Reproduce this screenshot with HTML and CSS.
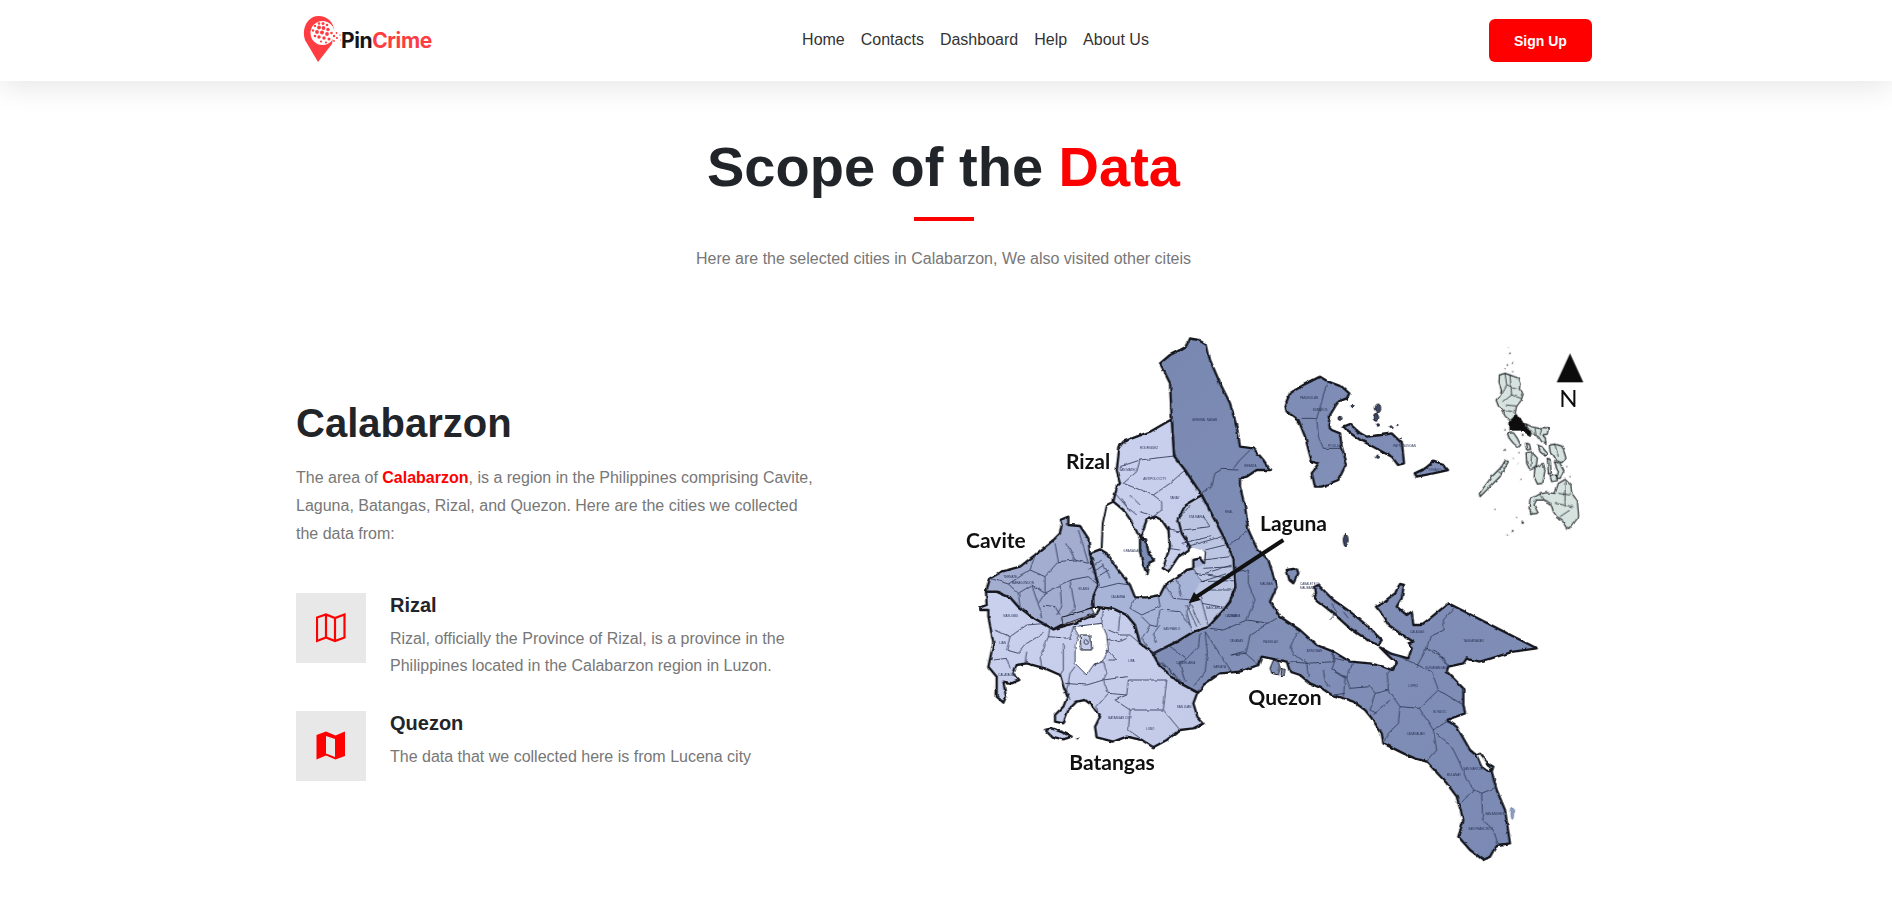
FILE: index.html
```html
<!DOCTYPE html>
<html lang="en">
<head>
<meta charset="utf-8">
<title>PinCrime</title>
<link rel="stylesheet" href="styles.css">
</head>
<body>
<header class="topbar">
  <a class="brand" href="#">
    <svg class="brand-pin" viewBox="0 0 40 50" aria-hidden="true">
      <path class="pin-body" d="M15 48 L2 26 C-2 14 5 2 15.500 2 C25 2 31 9 31 17 L29 30 Z"/>
      <circle class="pin-hole" cx="19.500" cy="19" r="12"/>
      <g class="pin-dots">
        <circle cx="16" cy="9.500" r="1.300"/><circle cx="20" cy="9.500" r="1.500"/><circle cx="24" cy="11" r="1.300"/>
        <circle cx="12" cy="12" r="1.200"/><circle cx="16" cy="13.500" r="1.900"/><circle cx="20.500" cy="14" r="1.900"/><circle cx="25" cy="15.500" r="1.700"/>
        <circle cx="10" cy="16.500" r="1.200"/><circle cx="14" cy="18" r="1.900"/><circle cx="19" cy="18.500" r="2"/><circle cx="24" cy="20" r="1.900"/><circle cx="28.500" cy="19" r="1.300"/>
        <circle cx="12" cy="22" r="1.300"/><circle cx="16" cy="23" r="1.700"/><circle cx="21" cy="24" r="1.700"/><circle cx="26" cy="25" r="1.500"/>
        <circle cx="18" cy="27.500" r="1.100"/><circle cx="23" cy="28.500" r="1.100"/>
        <circle cx="31" cy="22" r="1.200"/><circle cx="33.500" cy="19" r=".9"/><circle cx="34" cy="24" r="1.100"/><circle cx="31" cy="27" r=".9"/><circle cx="37" cy="21" r=".7"/><circle cx="37.500" cy="26" r=".6"/>
      </g>
    </svg>
    <span class="brand-name">Pin<span class="brand-accent">Crime</span></span>
  </a>
  <nav class="nav">
    <a href="#">Home</a>
    <a href="#">Contacts</a>
    <a href="#">Dashboard</a>
    <a href="#">Help</a>
    <a href="#">About Us</a>
  </nav>
  <a class="signup" href="#">Sign Up</a>
</header>

<main>
  <section class="intro">
    <h1>Scope of the <span class="red">Data</span></h1>
    <div class="rule"></div>
    <p>Here are the selected cities in Calabarzon, We also visited other citeis</p>
  </section>

  <section class="scope">
    <div class="copy">
      <h2>Calabarzon</h2>
      <p class="lead">The area of <strong class="red">Calabarzon</strong>, is a region in the Philippines comprising Cavite, Laguna, Batangas, Rizal, and Quezon. Here are the cities we collected the data from:</p>
      <div class="items">
        <div class="item">
          <div class="item-icon">
            <svg viewBox="0 0 30 30" aria-hidden="true"><path class="map-line" d="M1 28 V4.500 L10 1.500 L19 5 L28.500 1.500 V24.500 L19 28 L10 24.500 Z M10 1.500 V24.500 M19 5 V28"/></svg>
          </div>
          <div class="item-text">
            <h3>Rizal</h3>
            <p>Rizal, officially the Province of Rizal, is a province in the Philippines located in the Calabarzon region in Luzon.</p>
          </div>
        </div>
        <div class="item">
          <div class="item-icon">
            <svg viewBox="0 0 30 30" aria-hidden="true"><path class="map-solid" fill-rule="evenodd" d="M0.500 28.500 V4 L10 0.500 L19.500 4.500 L29 0.500 V25 L19.500 28.500 L10 24.500 Z M10 5 V22.500 L19 26 V8 Z"/></svg>
          </div>
          <div class="item-text">
            <h3>Quezon</h3>
            <p>The data that we collected here is from Lucena city</p>
          </div>
        </div>
      </div>
    </div>

    <svg class="region-map" viewBox="0 -540 1893 1650" role="img" aria-label="Map of Calabarzon">
      <defs>
        <linearGradient id="deep" gradientUnits="userSpaceOnUse" x1="600" y1="-500" x2="1700" y2="1000">
          <stop offset="0" stop-color="#7888b1"/><stop offset=".5" stop-color="#8290b8"/><stop offset="1" stop-color="#7a8ab4"/>
        </linearGradient>
        <linearGradient id="pale" gradientUnits="userSpaceOnUse" x1="80" y1="200" x2="700" y2="700">
          <stop offset="0" stop-color="#c9d1ee"/><stop offset="1" stop-color="#c3cbe9"/>
        </linearGradient>
        <filter id="rough" filterUnits="userSpaceOnUse" x="0" y="-540" width="1893" height="1650">
          <feTurbulence type="fractalNoise" baseFrequency=".045" numOctaves="2" seed="4" result="noise"/>
          <feDisplacementMap in="SourceGraphic" in2="noise" scale="9" xChannelSelector="R" yChannelSelector="G"/>
        </filter>
      </defs>

      <g class="rough">
      <path class="land deep" d="M690,-515 L715,-510 L740,-495 L750,-450 L780,-380 L810,-320 L830,-250 L840,-190 L880,-185 L910,-150 L930,-120 L890,-120 L860,-100 L840,-95 L840,-70 L855,-10 L865,60 L890,115 L925,150 L950,230 L930,275 L960,320 L1020,360 L1070,405 L1120,425 L1170,455 L1230,460 L1270,470 L1295,480 L1310,460 L1290,442 L1260,412 L1290,430 L1345,445 L1355,415 L1345,400 L1360,395 L1320,370 L1285,345 L1260,305 L1248,290 L1265,280 L1305,250 L1315,230 L1320,222 L1332,225 L1325,265 L1310,290 L1340,315 L1355,305 L1360,345 L1385,345 L1465,280 L1730,415 L1660,425 L1560,455 L1525,448 L1520,445 L1510,460 L1465,470 L1460,485 L1510,535 L1510,585 L1515,610 L1460,630 L1490,650 L1530,720 L1565,750 L1600,770 L1595,785 L1610,840 L1635,900 L1650,1000 L1610,1005 L1590,1040 L1570,1050 L1530,1020 L1495,980 L1510,930 L1490,860 L1460,820 L1400,755 L1365,745 L1330,730 L1270,700 L1265,670 L1235,625 L1215,600 L1180,575 L1150,565 L1115,555 L1085,535 L1050,520 L1020,495 L990,485 L980,455 L905,440 L895,465 L840,485 L780,490 L730,525 L715,548 L660,520 L600,470 L578,428 L650,395 L700,365 L745,350 L790,300 L810,275 L825,230 L820,150 L790,80 L725,-45 L642,-162 L635,-272 L630,-380 L600,-440 L630,-465 L680,-490 Z"/>
      <path class="land pale" d="M78,245 L110,245 L150,262 L175,290 L215,320 L270,350 L280,358 L340,340 L410,312 L420,292 L460,296 L500,315 L525,345 L540,400 L575,425 L600,470 L660,520 L712,548 L700,580 L712,620 L730,640 L700,655 L660,660 L620,690 L580,712 L545,690 L500,680 L460,695 L410,682 L405,650 L420,620 L395,585 L375,570 L350,575 L325,600 L310,640 L285,635 L285,615 L310,590 L322,560 L310,530 L300,495 L255,475 L200,460 L170,465 L160,490 L178,510 L155,520 L130,515 L138,560 L130,578 L110,560 L110,500 L85,470 L100,400 L85,320 L85,300 L60,300 L60,292 L80,285 Z"/>
      <path class="land mid" d="M90,205 L125,185 L180,170 L225,135 L280,90 L300,70 L305,45 L300,30 L325,20 L325,45 L360,48 L385,85 L390,130 L415,225 L400,260 L400,290 L360,315 L280,358 L215,320 L175,290 L150,262 L110,245 L78,245 Z"/>
      <path class="land mid-soft" d="M390,130 L420,118 L440,130 L475,180 L510,225 L525,262 L560,262 L600,255 L615,225 L650,205 L680,180 L700,175 L700,150 L720,145 L735,165 L738,125 L715,105 L690,110 L665,70 L655,30 L675,-15 L725,-45 L790,80 L820,150 L825,230 L810,275 L790,300 L745,350 L700,365 L650,395 L580,430 L540,400 L525,345 L500,315 L460,296 L420,292 L400,290 L400,260 L415,225 Z"/>
      <path class="mid-lake" d="M715,-45 L790,80 L820,150 L825,230 L790,300 L745,350 L700,365 L680,300 L720,215 L700,175 L735,165 L738,125 L690,110 L665,70 L655,30 L675,-15 Z"/>
      <path class="laguna-edge" d="M725,-45 L790,80 L820,150 L825,230 L810,275 L790,300 L745,350 L700,365"/>
      <path class="land pale" d="M635,-272 L570,-235 L490,-205 L478,-190 L475,-162 L470,-120 L480,-80 L470,-70 L460,-25 L490,0 L515,35 L540,85 L560,30 L585,20 L605,30 L625,60 L630,110 L608,175 L625,185 L655,140 L685,120 L690,110 L665,70 L655,30 L675,-15 L725,-45 L675,-120 L642,-162 Z"/>
      <path class="land deep" d="M540,85 L558,88 L565,130 L585,150 L568,158 L562,195 L548,160 L540,125 Z"/>
      <path class="shore" d="M460,-25 L440,-15 L428,40 L425,115"/>

      <path class="lake" d="M340,350 L425,340 L440,375 L445,420 L430,450 L400,465 L380,495 L345,460 L345,410 L355,375 Z"/>
      <path class="land pale thin" d="M360,375 L392,375 L395,420 L362,420 Z"/>
      <circle class="thin-ring" cx="379" cy="396" r="7"/>

      <path class="land mid thin" d="M305,322 L395,295 L402,310 L308,345 Z"/>

      <path class="land deep" d="M600,190 L640,165 L690,140 L715,155 L755,170 L778,190 L770,205 L745,215 L735,230 L720,255 L715,290 L725,300 L750,310 L755,350 L770,400 L745,450 L695,470 L675,470 L665,430 L685,400 L665,395 L645,320 L625,270 L590,245 L585,225 Z" transform="translate(390,-540)"/>
      <path class="land deep" d="M1151,-250 L1170,-258 L1201,-230 L1220,-220 L1264,-225 L1295,-230 L1326,-200 L1332,-140 L1314,-135 L1295,-160 L1257,-180 L1220,-200 L1201,-210 L1164,-235 Z"/>
      <path class="land deep" d="M1364,-110 L1395,-125 L1420,-145 L1451,-135 L1464,-120 L1420,-110 L1370,-100 Z"/>
      <path class="land deep" d="M1065,230 L1075,225 L1120,270 L1170,305 L1225,350 L1265,390 L1255,405 L1230,395 L1170,355 L1120,310 L1075,275 L1060,260 L1068,250 Z"/>
      <path class="land deep" d="M980,180 L1010,175 L1015,190 L1000,220 L988,210 Z"/>
      <path class="land deep thin" d="M940,450 L955,455 L960,475 L955,495 L935,490 L930,475 Z"/>
      <path class="land deep thin" d="M965,475 L975,478 L972,498 L962,500 Z"/>
      <path class="land pale" d="M255,660 L275,655 L315,670 L335,680 L310,688 L275,680 Z"/>
      <ellipse class="dot" cx="1157" cy="90" rx="7" ry="20"/>
      <ellipse class="dot" cx="1254" cy="-305" rx="8" ry="13"/>
      <ellipse class="dot" cx="1248" cy="-278" rx="8" ry="12"/>
      <circle class="dot" cx="1254" cy="-255" r="4"/>
      <circle class="dot" cx="1251" cy="-160" r="5"/>
      <circle class="dot" cx="1177" cy="-312" r="5"/>
      <circle class="dot" cx="1140" cy="-275" r="6"/>
      <circle class="dot" cx="1293" cy="-250" r="3"/>
      <circle class="dot" cx="1312" cy="-255" r="2"/>
      <circle class="dot" cx="1322" cy="-215" r="2"/>
      <circle class="dot" cx="352" cy="685" r="2.500"/>
      <ellipse class="islet" cx="1657" cy="910" rx="4" ry="18"/>

      <g class="borders">
        <path d="M90,205 L145,222 L210,180 L225,135 M210,180 L255,200 L295,155 L285,100 M295,155 L345,150 L320,100 M345,150 L385,160 L355,60 M255,200 L255,250 L235,280 M145,222 L175,250 L215,225 L255,250 M175,250 L180,290 M215,225 L240,300 L245,325 M255,250 L300,225 L330,210 L385,200 L415,225 M300,225 L305,290 L290,315 M330,210 L345,295 L320,320 M250,285 L285,290 L300,315 M385,180 L425,150 M395,190 L430,165 M405,205 L445,180 M430,160 L450,205 M415,235 L475,220 L510,225"/>
        <path d="M525,262 L510,295 L545,315 L600,290 L595,258 M545,320 L570,345 L590,350 L600,300 L660,305 L690,345 L700,365 M570,345 L545,385 L560,410 M600,345 L580,370 L590,400 M615,225 L640,265 L695,270 L730,250 M650,205 L665,260 M695,270 L680,305 L690,345 M680,285 L710,350 M690,280 L720,345 M720,255 L745,350 M725,280 L780,290 M745,240 L815,240 M735,190 L815,165 M700,175 L725,215 L818,185 M720,215 L822,212"/>
        <path d="M105,360 L150,380 L200,345 L260,340 M150,380 L140,420 L175,430 L200,400 L250,370 M100,450 L140,445 L150,475 M270,350 L265,380 L240,440 L245,470 M200,425 L195,460 M265,380 L330,385 L340,350 M310,400 L310,480 L300,495 M345,470 L330,490 L320,540 L330,570 M315,520 L380,525 L430,510 L445,550 L500,555 L505,510 L620,510 M400,465 L430,455 L440,490 L430,510 L500,500 M445,550 L410,590 L415,620 M500,555 L465,570 L510,600 L505,660 L580,712 M620,510 L610,600 L660,660 M510,600 L610,600 M445,360 L480,375 L510,375 L540,400 M430,300 L425,340 M480,310 L475,365 M440,385 L480,395 L500,385 M440,420 L470,450 L445,450 M605,455 L640,490 L665,520"/>
        <g transform="translate(390,-540)">
          <path d="M90,410 L150,390 L140,425 L100,460 M150,390 L252,378 M100,460 L190,495 L240,460 L285,420 M190,495 L215,515 L215,540 L190,560 L150,545 M75,490 L110,530 L140,555 M95,505 L120,545 M120,495 L150,525 M265,570 L300,525 M235,600 L270,605 M235,655 L270,660 M280,600 L360,590 L340,560 M275,640 L360,620 M290,650 L395,620 M345,660 L405,645 M340,690 L420,680 M340,715 L425,710 M315,730 L420,745 M480,360 L450,390 L430,415 M335,490 L365,470 L375,430 L395,418 L445,420 M418,645 L470,605"/>
          <path d="M710,160 L695,215 L680,265 L685,320 L700,355 L755,355 M635,265 L680,265"/>
        </g>
        <g transform="translate(510,90)">
          <path d="M310,95 L355,90 L355,130 L375,180 L350,240 M240,265 L280,270 L350,240 L385,245 L415,250 L440,235 M415,250 L360,285 L348,340 L300,345 M225,275 L305,395 M225,275 L232,340 L225,395 L190,440 M210,280 L205,320 L170,355 L150,375 L165,425 M65,340 L120,320 L170,355 M300,345 L340,335 L375,365 L385,380 M505,275 L480,320 L490,340 L530,370 L480,365 M605,340 L612,365 L530,370 M530,370 L535,410 M580,390 L585,420 L600,440 M80,360 L120,390 L155,425"/>
          <path d="M605,190 L620,215 L600,240 M640,215 L655,235"/>
        </g>
        <g transform="translate(1020,180)">
          <path d="M95,245 L105,270 L95,300 L135,325 L130,380 M105,265 L158,278 L140,325 L150,355 L210,350 L225,370 M262,312 L265,360 L225,370 L210,420 L230,430 M290,275 L262,312 M265,360 L300,410 L358,415 L415,360 L395,305 L262,243 M300,410 L295,460 L265,490 L255,515 M358,415 L400,480 L410,540 L380,575 M415,360 L490,405 M400,480 L440,455 L470,470 M410,490 L455,530 L475,570 L500,630 L525,660 M525,660 L545,670 L590,650 M525,660 L475,705 M545,670 L548,750 L580,780 L595,825 M220,435 L240,415 L270,390 M465,110 L430,150 L432,180 L390,200 L380,235 L350,290 M380,235 L400,240 L410,245 L445,290 M380,235 L430,265 L445,285 M140,325 L100,300 M135,370 L100,375"/>
        </g>
      </g>

      <path class="tarn" d="M1550,735 L1560,730 L1580,755 L1595,785 L1585,785 L1565,770 Z"/>

      <g class="inset" transform="translate(1500,-540)">
        <path d="M118,135 L135,130 L150,135 L172,143 L180,160 L178,178 L190,190 L183,212 L170,228 L165,250 L172,258 L150,272 L135,258 L125,240 L115,228 L108,210 L122,195 L124,180 L117,160 Z"/>
        <path class="inset-line" d="M135,130 L140,165 L125,190 M140,165 L172,175 M150,135 L155,195 L130,215 M155,195 L183,205 M138,225 L168,228 M128,240 L160,245"/>
        <path d="M195,280 L215,290 L235,295 L250,292 L265,295 L262,312 L245,315 L255,322 L258,340 L245,335 L235,320 L215,310 L205,298 Z"/>
        <path class="inset-line" d="M225,295 L228,315 M245,295 L240,312"/>
        <path d="M142,310 L160,308 L172,325 L182,345 L175,352 L160,340 L148,325 Z"/>
        <path d="M196,340 L208,342 L212,358 L200,360 Z"/>
        <path d="M232,345 L245,350 L262,370 L255,378 L240,365 Z"/>
        <path d="M268,345 L285,342 L305,348 L312,365 L318,385 L305,398 L290,392 L280,375 L270,365 Z"/>
        <path class="inset-line" d="M285,345 L295,380"/>
        <path d="M283,395 L300,400 L312,425 L300,445 L290,445 L295,425 Z"/>
        <path d="M198,368 L215,365 L232,385 L228,412 L210,420 L200,400 Z"/>
        <path class="inset-line" d="M215,370 L212,410"/>
        <path d="M225,412 L250,400 L255,420 L248,460 L232,462 L222,440 Z"/>
        <path d="M262,385 L270,388 L274,430 L265,432 Z"/>
        <path d="M270,438 L288,435 L292,452 L275,455 Z"/>
        <path d="M135,390 L145,395 L120,440 L85,475 L60,500 L58,490 L95,440 L125,410 Z"/>
        <path class="inset-line" d="M128,395 L138,400 M120,410 L132,415 M115,425 L125,430"/>
        <path d="M258,488 L285,490 L295,460 L315,448 L332,465 L335,490 L352,512 L356,560 L345,575 L330,595 L318,592 L305,568 L290,560 L280,545 L272,520 L250,510 L230,510 L222,525 L235,550 L220,552 L207,535 L210,508 L240,492 Z"/>
        <path class="inset-line" d="M295,490 L330,495 M285,520 L340,530 M300,560 L330,540 M315,455 L315,530 M240,495 L250,510"/>
        <path class="inset-black" d="M150,275 L165,258 L180,265 L195,290 L215,305 L210,320 L195,300 L170,300 L150,300 Z"/>
        <g class="inset-dots">
          <circle cx="145" cy="55" r="2"/><circle cx="150" cy="70" r="2.500"/><circle cx="142" cy="105" r="2.500"/><circle cx="157" cy="100" r="2"/><circle cx="158" cy="122" r="2"/><circle cx="135" cy="118" r="2"/>
          <circle cx="135" cy="300" r="2.500"/><circle cx="188" cy="315" r="3"/><circle cx="135" cy="360" r="3"/><circle cx="180" cy="368" r="2"/><circle cx="160" cy="385" r="1.500"/><circle cx="172" cy="400" r="1.500"/><circle cx="183" cy="448" r="2"/>
          <circle cx="105" cy="538" r="2"/><circle cx="170" cy="562" r="2"/><circle cx="188" cy="578" r="4"/><circle cx="215" cy="552" r="4"/><circle cx="155" cy="603" r="3"/><circle cx="142" cy="615" r="2"/><circle cx="322" cy="598" r="2"/><circle cx="320" cy="410" r="2"/><circle cx="330" cy="440" r="2"/>
        </g>
      </g>
      </g>

      <path class="north-mark" d="M1790,-383 L1870,-383 L1830,-470 Z"/>

      <g transform="translate(390,-540)">
        <path class="arrow-shaft" d="M580,630 L320,800"/>
        <path class="arrow-head" d="M296,820 L312,786 L332,810 Z"/>
      </g>

      <text class="label" x="18" y="114">Cavite</text>
      <text class="label" x="328" y="779">Batangas</text>
      <text class="label" x="318" y="-124">Rizal</text>
      <text class="label" x="900" y="62">Laguna</text>
      <text class="label" x="865" y="584">Quezon</text>
      <text class="north" x="1825" y="-308" text-anchor="middle">N</text>

      <g class="tiny">
        <text x="695" y="-268">GENERAL NAKAR</text>
        <text x="852" y="-130">INFANTA</text>
        <text x="795" y="10">REAL</text>
        <text x="540" y="-182">RODRIGUEZ</text>
        <text x="478" y="-118">SAN MATEO</text>
        <text x="550" y="-90">ANTIPOLO CITY</text>
        <text x="630" y="-32">TANAY</text>
        <text x="686" y="25">STA MARIA</text>
        <text x="490" y="125">GRANADAGA</text>
        <text x="1020" y="-332">PANUKULAN</text>
        <text x="1058" y="-298">BURDEOS</text>
        <text x="1105" y="-190">POLILLO</text>
        <text x="1300" y="-190">PATNANUNGAN</text>
        <text x="1405" y="-118">JOMALIG</text>
        <text x="1020" y="225">CABALETE IS</text>
        <text x="1020" y="237">MAUBAN QC</text>
        <text x="900" y="225">MAUBAN</text>
        <text x="800" y="320">LUISIANA</text>
        <text x="810" y="395">TAYABAS</text>
        <text x="910" y="400">PAGBILAO</text>
        <text x="1040" y="425">ATIMONAN</text>
        <text x="1350" y="370">CALAUAG</text>
        <text x="1510" y="395">TAGKAWAYAN</text>
        <text x="1395" y="477">GUINAYANGAN</text>
        <text x="1345" y="530">LOPEZ</text>
        <text x="1420" y="608">BONDOC</text>
        <text x="1340" y="675">CATANAUAN</text>
        <text x="1510" y="780">SAN NARCISO</text>
        <text x="1460" y="798">MULANAY</text>
        <text x="1525" y="960">SAN FRANCISCO</text>
        <text x="1575" y="915">SAN ANDRES</text>
        <text x="130" y="322">NASUGBU</text>
        <text x="118" y="403">LIAN</text>
        <text x="115" y="497">CALATAGAN</text>
        <text x="445" y="627">BATANGAS CITY</text>
        <text x="558" y="660">LOBO</text>
        <text x="650" y="595">SAN JUAN</text>
        <text x="505" y="455">LIPA</text>
        <text x="355" y="240">SILANG</text>
        <text x="130" y="205">TERNATE</text>
        <text x="155" y="222">MARAGONDON</text>
        <text x="452" y="265">CALAMBA</text>
        <text x="610" y="360">SAN PABLO</text>
        <text x="738" y="298">NAGCARLAN</text>
        <text x="795" y="322">LUCBAN</text>
        <text x="760" y="475">SARIAYA</text>
        <text x="648" y="462">CANDELARIA</text>
      </g>
    </svg>
  </section>
</main>
</body>
</html>
```
FILE: styles.css
```css
* {
  box-sizing: border-box;
}

html,
body {
  margin: 0;
  padding: 0;
  background: #fff;
  overflow-x: hidden;
}

body {
  font-family: "Liberation Sans", Arial, sans-serif;
  color: #777;
  font-size: 16px;
}

a {
  text-decoration: none;
  color: inherit;
}

.red {
  color: #ff0000;
}

/* header */
.topbar {
  height: 81px;
  padding: 0 300px 0 303px;
  display: flex;
  align-items: center;
  justify-content: space-between;
  background: #fff;
  box-shadow: 0 6px 30px rgba(0, 0, 0, 0.1);
  position: relative;
}

.brand {
  display: flex;
  align-items: center;
  width: 130px;
}

.brand-pin {
  width: 40px;
  height: 50px;
  flex: none;
  margin-top: -3px;
}

.pin-body {
  fill: #ff3c41;
}

.pin-hole {
  fill: #fff;
}

.pin-dots circle {
  fill: #ff3c41;
}

.brand-name {
  font-family: Inter, "Liberation Sans", sans-serif;
  font-weight: 700;
  font-size: 21px;
  letter-spacing: -0.4px;
  color: #151515;
  margin-left: -2px;
}

.brand-accent {
  color: #ff3c41;
}

.nav {
  display: flex;
  gap: 16px;
  color: #333;
  margin-left: 29px;
  margin-top: -2px;
}

.signup {
  width: 103px;
  height: 43px;
  border-radius: 6px;
  background: #ff0000;
  color: #fff;
  font-weight: 700;
  font-size: 14px;
  display: flex;
  align-items: center;
  justify-content: center;
}

/* intro */
.intro {
  padding: 51px 301px 0 296px;
  text-align: center;
}

.intro h1 {
  margin: 0;
  font-size: 56px;
  line-height: 70px;
  font-weight: 700;
  color: #212529;
}

.rule {
  width: 60px;
  height: 4px;
  background: #ff0000;
  margin: 15px auto 0;
}

.intro p {
  margin: 26px 0 0;
  line-height: 24px;
}

/* main row */
.scope {
  padding: 0 301px 0 296px;
  margin-top: 58px;
  display: flex;
  justify-content: space-between;
  align-items: flex-start;
}

.copy {
  width: 520px;
  padding-top: 70px;
}

.copy h2 {
  margin: 0;
  font-size: 40px;
  line-height: 48px;
  font-weight: 700;
  color: #212529;
}

.lead {
  margin: 17px 0 0;
  line-height: 28px;
}

.lead strong {
  font-weight: 700;
}

.items {
  display: flex;
  flex-direction: column;
  gap: 32px;
  margin-top: 45px;
}

.item {
  display: flex;
  gap: 24px;
}

.item-icon {
  width: 70px;
  height: 70px;
  flex: none;
  background: #e8e8e8;
  display: flex;
  align-items: center;
  justify-content: center;
}

.item-icon svg {
  width: 30px;
  height: 30px;
}

.map-line {
  fill: none;
  stroke: #ff0000;
  stroke-width: 2.2;
}

.map-solid {
  fill: #ff0000;
}

.item-text h3 {
  margin: 0;
  font-size: 20px;
  line-height: 24px;
  font-weight: 700;
  color: #212529;
}

.item-text p {
  margin: 8px 0 0;
  line-height: 27px;
}

/* map */
.region-map {
  flex: none;
  width: 631px;
  height: 550px;
  margin-top: 1px;
  filter: blur(0.35px);
}

.rough {
  filter: url(#rough);
}

.land {
  stroke: #15181f;
  stroke-width: 7;
  stroke-linejoin: round;
}

.land.thin {
  stroke-width: 3;
}

.deep {
  fill: url(#deep);
}

.pale {
  fill: url(#pale);
}

.mid {
  fill: #a2add0;
}

.mid-soft {
  fill: #a8b4d7;
}

.mid-lake {
  fill: #bcc6e3;
}

.laguna-edge {
  fill: none;
  stroke: #15181f;
  stroke-width: 6;
}

.shore {
  fill: none;
  stroke: #15181f;
  stroke-width: 6;
}

.lake {
  fill: #fff;
  stroke: #3a4360;
  stroke-width: 3;
}

.tarn {
  fill: #fff;
  stroke: #15181f;
  stroke-width: 5;
}

.thin-ring {
  fill: none;
  stroke: #3a4360;
  stroke-width: 3;
}

.dot {
  fill: #3c4766;
  stroke: #15181f;
  stroke-width: 3;
}

.islet {
  fill: #8fa0c4;
  stroke: #5a6a8c;
  stroke-width: 2;
}

.borders path {
  fill: none;
  stroke: #2c3552;
  stroke-width: 2.5;
  stroke-linejoin: round;
}

.inset path {
  fill: #d6e3df;
  stroke: #22262a;
  stroke-width: 3.5;
  stroke-linejoin: round;
}

.inset .inset-line {
  fill: none;
  stroke-width: 2.5;
}

.inset .inset-black {
  fill: #0c0c0c;
  stroke: #0c0c0c;
}

.inset-dots circle {
  fill: #3a3f44;
}

.north-mark {
  fill: #0c0c0c;
}

.arrow-shaft {
  fill: none;
  stroke: #111;
  stroke-width: 12;
}

.arrow-head {
  fill: #111;
}

.label {
  font-family: Lato, "Liberation Sans", sans-serif;
  font-weight: 700;
  font-size: 63px;
  fill: #101010;
}

.north {
  font-family: Lato, "Liberation Sans", sans-serif;
  font-size: 72px;
  fill: #0c0c0c;
}

.tiny text {
  font-family: "Liberation Sans", Arial, sans-serif;
  font-size: 9px;
  fill: #2b3557;
}
```
